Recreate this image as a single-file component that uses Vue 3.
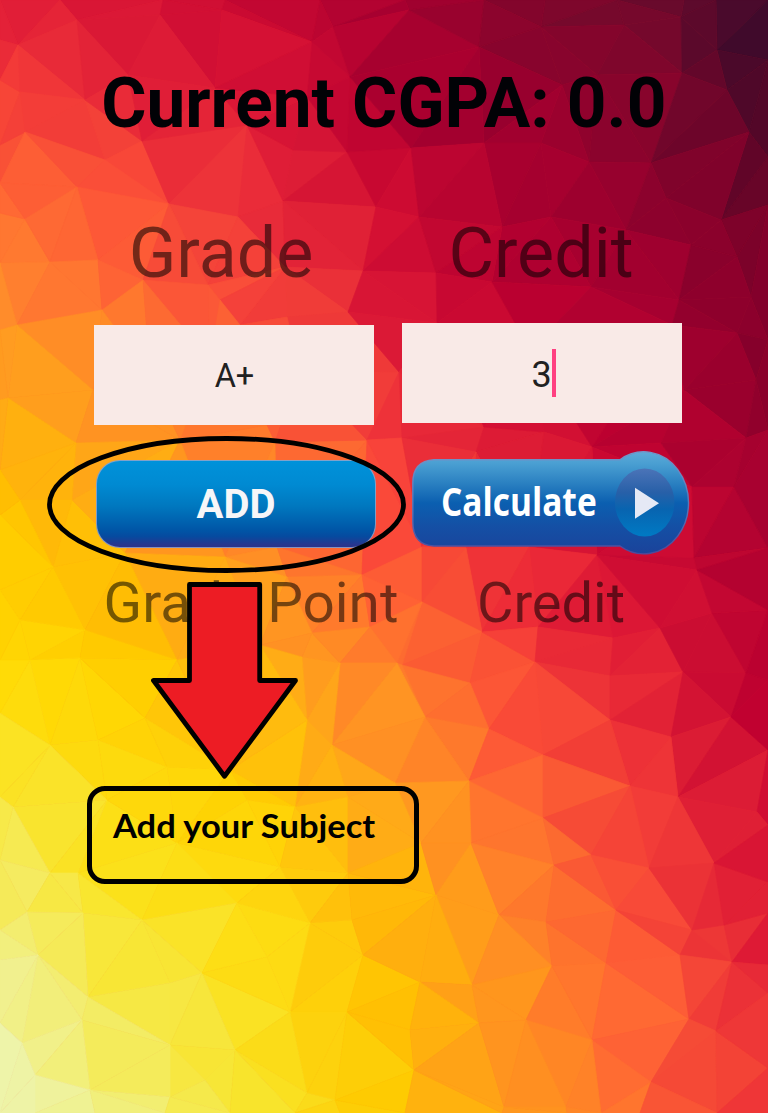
<script setup>
import { ref } from 'vue'

const W = 768
const H = 1113
const grade = ref('A+')
const credit = ref('3')

// Vertices of the low-poly backdrop
const points = `0,0 60,0 163,0 225,0 320,0 405,0 484,0 545,0 617,0 684,0 716,0 768,0 768,60 768,157 768,205
0,40 0,80 0,145 0,183 0,213 0,263 77,20 18,45 160,15 222,10 312,42 85,100 20,92 25,132 105,160 142,141 247,125
77,187 25,219 169,204 238,217 283,201 293,150 347,152 376,207 50,262 98,260 143,280 208,285 363,271 285,267
215,88 128,75 307,97 333,27 350,77 409,10 479,47 541,27 624,25 681,17 717,50 682,73 597,75 562,85 727,90 749,132
651,163 589,162 541,143 484,143 411,148 666,198 721,220 551,217 502,227 419,217 626,230 691,245 679,300 737,257
436,273 492,282 591,287 751,297 768,340 17,325 102,310 8,398 93,390 76,443 180,440 267,425 275,442 367,440
348,312 287,317 220,300 240,325 20,500 53,567 72,500 225,557 277,547 287,577 125,553 362,575 0,330 0,400 0,470
0,515 0,590 150,375 210,360 300,370 399,372 402,438 437,323 476,452 484,427 544,432 592,447 530,350 672,325
684,390 756,380 746,438 661,443 692,487 694,558 597,555 529,547 422,547 466,548 734,487 737,333 768,430 768,548
422,602 402,665 482,632 470,683 535,662 538,627 613,638 610,676 660,628 683,672 712,613 746,673 610,720 671,737
731,717 489,729 425,717 469,781 543,755 630,786 678,797 757,812 543,818 697,570 768,610 768,680 768,750 768,825
85,630 80,658 30,660 50,745 98,740 145,718 177,660 302,657 312,633 340,663 397,663 370,627 307,720 332,745
395,783 348,797 295,807 247,800 230,770 13,807 107,800 177,843 50,873 78,873 0,713 280,867 348,873 0,797 20,620
260,645 167,767 0,660 0,860 27,912 83,913 142,920 237,903 310,923 363,955 352,920 347,1012 290,1012 202,973
170,983 88,997 38,955 82,1020 22,1043 170,1045 235,1050 205,1080 307,1093 90,1090 35,1075 170,1097 335,1100
0,930 0,960 0,1023 0,1113 35,1113 95,1113 165,1113 230,1113 295,1113 340,1113 405,1113 267,957 421,843 471,843
436,895 499,915 554,865 546,922 552,966 472,985 420,982 410,1030 414,1070 479,1023 526,1020 592,1040 606,963
616,910 591,855 649,868 692,930 680,955 689,1019 716,1031 732,962 724,925 714,863 651,1082 566,1107 504,1107
502,1113 567,1113 601,1113 640,1113 717,1113 768,1113 768,882 768,913 768,965 768,993 768,1068`
  .trim()
  .split(/\s+/)
  .map((pair) => pair.split(',').map(Number))

// Colour field sampled every 128px across, at the given heights
const rows = [0, 100, 200, 300, 400, 500, 600, 700, 800, 900, 1000, 1113]
const field = `e01a38 d81535 c80832 a60030 85052c 700a2c 3c0a2c
f63f38 e62638 da1335 b80030 98002e 84052c 480828
ff6a34 fc5038 ea2c3a d00c32 b00030 98002e 6c0428
ff8c2c ff6a34 f8483a dc1836 c00030 a80030 80002a
ffa818 ff9024 ff6634 f0343a d41034 bc0030 90002c
ffc000 ffac14 ff7a2e fa463a e42436 cc0832 a80030
ffd400 ffc200 ff9c20 ff6234 f03038 d81234 b40030
ffdc08 ffd400 ffb810 ff8a28 fc4e38 e82836 c00030
f8e838 fddc10 ffd000 ffa81a ff6c32 f23a38 d41034
f4ec68 fae420 fedc10 ffb808 ff8828 fa4c38 da1434
f0f29c f5ea50 fce018 ffc400 ff9220 ff6236 e62438
ecf6c0 f2ee70 f8e428 fecb00 ff9a1c ff6c32 ee3038`
  .split('\n')
  .map((line) => line.split(' ').map((c) => [0, 2, 4].map((i) => parseInt(c.substr(i, 2), 16))))

function colourAt(x, y) {
  const cx = Math.min(5.999, Math.max(0, x / 128))
  const i = Math.floor(cx)
  const u = cx - i
  const cy = Math.min(H, Math.max(0, y))
  let j = 0
  while (j < 10 && cy >= rows[j + 1]) j++
  const v = (cy - rows[j]) / (rows[j + 1] - rows[j])
  const mix = [0, 1, 2].map((k) => {
    const top = field[j][i][k] * (1 - u) + field[j][i + 1][k] * u
    const bottom = field[j + 1][i][k] * (1 - u) + field[j + 1][i + 1][k] * u
    return Math.round(top * (1 - v) + bottom * v)
  })
  return `rgb(${mix})`
}

// Incremental Delaunay triangulation
function triangulate(source) {
  const n = source.length
  const pts = source.map(([x, y], i) => [x + Math.sin(i * 7.1) * 0.01, y + Math.cos(i * 5.3) * 0.01])
  pts.push([-20000, -20000], [24000, -20000], [300, 30000])
  const make = (a, b, c) => {
    const [ax, ay] = pts[a]
    const bx = pts[b][0] - ax
    const by = pts[b][1] - ay
    const cx = pts[c][0] - ax
    const cy = pts[c][1] - ay
    const d = 2 * (bx * cy - by * cx)
    const ux = (cy * (bx * bx + by * by) - by * (cx * cx + cy * cy)) / d
    const uy = (bx * (cx * cx + cy * cy) - cx * (bx * bx + by * by)) / d
    return { v: [a, b, c], x: ax + ux, y: ay + uy, r: ux * ux + uy * uy }
  }
  let tris = [make(n, n + 1, n + 2)]
  for (let i = 0; i < n; i++) {
    const [px, py] = pts[i]
    const edges = new Map()
    const keep = []
    for (const t of tris) {
      if ((px - t.x) ** 2 + (py - t.y) ** 2 < t.r) {
        const [a, b, c] = t.v
        for (const e of [[a, b], [b, c], [c, a]]) {
          const key = Math.min(...e) + '-' + Math.max(...e)
          if (edges.has(key)) edges.delete(key)
          else edges.set(key, e)
        }
      } else keep.push(t)
    }
    for (const [a, b] of edges.values()) keep.push(make(a, b, i))
    tris = keep
  }
  return tris.filter((t) => t.v.every((k) => k < n)).map((t) => t.v)
}

const facets = triangulate(points).map((t) => {
  const p = t.map((k) => points[k])
  const x = (p[0][0] + p[1][0] + p[2][0]) / 3
  const y = (p[0][1] + p[1][1] + p[2][1]) / 3
  const h = Math.sin(x * 12.99 + y * 78.23) * 43758.5
  // Each facet borrows its colour from a little way along the gradient
  const shift = (h - Math.floor(h) - 0.5) * 30
  return { d: p.map((q) => q.join(',')).join(' '), fill: colourAt(x + shift, y - shift) }
})
</script>

<template>
  <main class="screen">
    <svg class="mesh" :viewBox="`0 0 ${W} ${H}`" aria-hidden="true">
      <polygon v-for="(f, i) in facets" :key="i" :points="f.d" :fill="f.fill" :stroke="f.fill" />
    </svg>

    <h1 class="title"><span>Current CGPA: 0.0</span></h1>

    <div class="columns heads">
      <span class="grade">Grade</span>
      <span class="credit">Credit</span>
    </div>

    <div class="fields">
      <div class="field">{{ grade }}</div>
      <div class="field field-credit">{{ credit }}<i class="caret"></i></div>
    </div>

    <div class="buttons">
      <button class="add"><span>ADD</span></button>
      <button class="calc">
        <svg class="calc-shape" viewBox="412 450 279 106">
          <defs>
            <linearGradient id="body" gradientUnits="userSpaceOnUse" x1="0" y1="451" x2="0" y2="555">
              <stop offset="0" stop-color="#5fabd9" />
              <stop offset=".12" stop-color="#4a9fd2" />
              <stop offset=".3" stop-color="#2c82c2" />
              <stop offset=".5" stop-color="#0b5fb0" />
              <stop offset=".72" stop-color="#1450a5" />
              <stop offset="1" stop-color="#1b429a" />
            </linearGradient>
            <linearGradient id="disc" x1="0" y1="0" x2="0" y2="1">
              <stop offset="0" stop-color="#4b74b8" />
              <stop offset=".35" stop-color="#2860a8" />
              <stop offset=".6" stop-color="#0864b0" />
              <stop offset="1" stop-color="#007ac4" />
            </linearGradient>
            <linearGradient id="rim" x1="0" y1="0" x2="0" y2="1">
              <stop offset="0" stop-color="#7196ca" />
              <stop offset=".6" stop-color="#5870b4" />
              <stop offset="1" stop-color="#4a4a9c" />
            </linearGradient>
          </defs>
          <path
            d="M434 459.7H620A44.7 51 0 1 1 620 546H434Q412.8 545 412.8 522V483Q412.8 461 434 459.7Z"
            fill="url(#body)" stroke="url(#rim)" stroke-width="1.4"
          />
          <ellipse cx="644.7" cy="502.5" rx="29.7" ry="34" fill="url(#disc)" />
          <path d="M635 487.7L659 503.2L635 518.7Z" fill="#e5e9f5" />
        </svg>
        <span class="calc-text">Calculate</span>
      </button>
    </div>

    <div class="columns results">
      <span class="grade">Grade Point</span>
      <span class="credit">Credit</span>
    </div>

    <svg class="marks" :viewBox="`0 0 ${W} ${H}`" aria-hidden="true">
      <ellipse cx="226.5" cy="504.5" rx="177" ry="66" fill="none" />
      <path d="M189.5 584.5H259.7V680.5H295.5L224.5 776.2L153.5 680.5H189.5Z" fill="#ed1c24" />
    </svg>
    <div class="callout"><span>Add your Subject</span></div>
  </main>
</template>

<style>
html,
body {
  margin: 0;
}
</style>

<style scoped>
.screen {
  position: relative;
  width: 768px;
  height: 1113px;
  overflow: hidden;
  background: #f8483a;
  font-family: Roboto, "Liberation Sans", sans-serif;
}
.mesh,
.marks {
  position: absolute;
  inset: 0;
  width: 768px;
  height: 1113px;
}
.mesh polygon {
  stroke-width: 0.7;
}
.marks {
  pointer-events: none;
}
.marks * {
  stroke: #000;
  stroke-width: 4.8;
  stroke-linejoin: round;
}
.title,
.columns,
.fields,
.buttons {
  position: relative;
}
.title {
  margin: 0;
  padding-top: 53px;
  font-size: 70px;
  line-height: 100px;
  font-weight: 700;
  text-align: center;
  color: #020206;
  white-space: nowrap;
}
.title span {
  display: inline-block;
  transform: scaleX(0.989);
}
.columns {
  display: flex;
  color: rgba(0, 0, 0, 0.54);
  white-space: nowrap;
}
.heads {
  padding: 50px 0 20px 61px;
  font-size: 70px;
  line-height: 100px;
}
.heads span {
  width: 320px;
  text-align: center;
}
.fields {
  display: flex;
  gap: 28px;
  padding-left: 94px;
  align-items: flex-start;
}
.field {
  display: flex;
  justify-content: center;
  align-items: center;
  box-sizing: border-box;
  width: 280px;
  height: 100px;
  margin-top: 2px;
  padding: 2px 0 0 1px;
  background: #f9eae7;
  color: #212121;
  font-size: 32.5px;
}
.field-credit {
  margin-top: 0;
  padding: 4px 1px 0 0;
  font-size: 36px;
}
.caret {
  width: 4px;
  height: 48px;
  margin: -4px -4px 0 0;
  background: #ff4081;
}
.buttons {
  display: flex;
  gap: 36px;
  height: 106px;
  padding: 25px 0 0 96px;
}
button {
  padding: 0;
  border: 0;
  background: none;
  font-family: inherit;
}
.add {
  width: 280px;
  height: 88px;
  margin-top: 10px;
  border: 1px solid rgba(150, 165, 200, 0.85);
  border-radius: 24px;
  background: linear-gradient(#0092da 0, #008ad2 28%, #0078bf 52%, #0055a6 80%, #064a9f 87%, #27378f 96%, #2b328a 100%) border-box;
  color: #f6f6f8;
  font-size: 40px;
  font-weight: 700;
}
.calc {
  display: flex;
  align-items: center;
  position: relative;
  width: 279px;
  height: 106px;
}
.calc-shape {
  position: absolute;
  inset: 0;
  width: 279px;
  height: 106px;
}
.calc-text {
  position: relative;
  margin: -6px 0 0 29px;
  color: #fff;
  font-family: "Open Sans", sans-serif;
  font-size: 39px;
  font-weight: 700;
  transform: scaleX(0.858);
  transform-origin: left;
}
.results {
  margin-top: -2px;
  padding: 0 0 0 91px;
  font-size: 56px;
  line-height: 98px;
}
.results span {
  width: 320px;
  text-align: center;
}
.results .grade {
  transform: scaleX(1.012);
}
.results .credit {
  width: 280px;
}
.callout {
  position: absolute;
  left: 87px;
  top: 786px;
  box-sizing: border-box;
  width: 332px;
  height: 98px;
  padding: 16px 0 0 21px;
  border: 5px solid #000;
  border-radius: 18px;
  color: #000;
  font: 700 33px/36px Lato, sans-serif;
  white-space: nowrap;
}
.callout span {
  display: inline-block;
  transform: scaleX(1.046);
  transform-origin: left;
}
</style>
